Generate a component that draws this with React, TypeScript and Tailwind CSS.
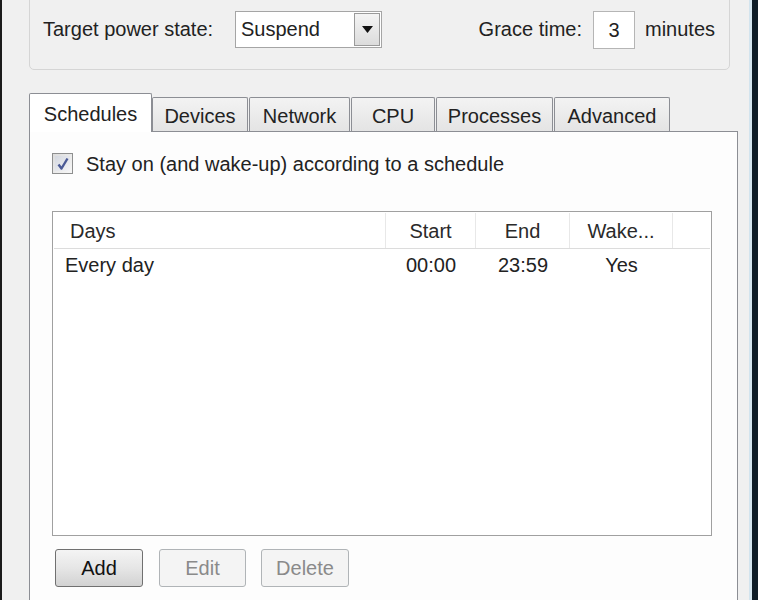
import { useState } from "react";

// Vista-style power settings dialog (schedules tab)

const tabs = [
  { label: "Devices", w: "w-[96px]" },
  { label: "Network", w: "w-[101px]" },
  { label: "CPU", w: "w-[84px]" },
  { label: "Processes", w: "w-[117px]" },
  { label: "Advanced", w: "w-[116px]" },
];

export default function App() {
  const [checked, setChecked] = useState(true);

  return (
    <div className="w-[758px] h-[600px] overflow-hidden flex bg-[#f0f0f0] text-[20px] leading-none text-[#222] font-['Liberation_Sans',Arial,sans-serif]">
      {/* left window frame */}
      <div className="w-[2px] shrink-0 bg-[#1b1b1b]" />

      <div className="flex-1 flex flex-col pl-[27px]">
        {/* Group box */}
        <div className="-mt-[12px] w-[701px] h-[82px] shrink-0 border border-[#d5d5d5] rounded-[5px] pt-[21px] pl-[13px] pr-[14px]">
          <div className="flex items-center h-[38px]">
            <span className="w-[192px]">Target power state:</span>
            <div className="w-[147px] h-[37px] border border-[#a5a5a5] bg-white flex items-center p-[1px]">
              <span className="flex-1 pl-[4px]">Suspend</span>
              <div className="w-[26px] h-[33px] border border-[#9a9a9a] bg-linear-to-b from-[#f4f4f4] to-[#dcdcdc] flex items-center justify-center">
                <svg width="11" height="7" viewBox="0 0 11 7">
                  <path d="M0 0 H11 L5.5 7 Z" fill="#111" />
                </svg>
              </div>
            </div>
            <div className="ml-auto flex items-center">
              <span>Grace time:</span>
              <div className="ml-[11px] w-[42px] h-[38px] border border-[#b5b5b5] bg-white flex items-center justify-center mt-[2px]">
                3
              </div>
              <span className="ml-[10px]">minutes</span>
            </div>
          </div>
        </div>

        {/* Tabs */}
        <div className="mt-[23px] flex items-end h-[38px] shrink-0">
          <div className="relative z-10 -mb-px w-[123px] h-[39px] bg-white border border-b-0 border-[#8c8e94] rounded-t-[2px] flex items-start justify-center pt-[10px]">
            Schedules
          </div>
          {tabs.map((t, i) => (
            <div
              key={t.label}
              className={`${t.w} ${i === 0 ? "ml-0" : "ml-[1px]"} h-[34px] border border-b-0 border-[#8c8e94] rounded-t-[2px] bg-linear-to-b from-[#f3f3f3] to-[#e4e4e4] flex items-center justify-center pt-[2px]`}
            >
              {t.label}
            </div>
          ))}
        </div>

        {/* Tab panel */}
        <div className="w-[709px] h-[600px] shrink-0 border border-[#8c8e94] bg-[#fdfdfd] pl-[22px] pt-[21px]">
          <label className="flex items-center cursor-pointer">
            <span
              onClick={() => setChecked(!checked)}
              className="w-[21px] h-[21px] border border-[#8e8f8f] bg-linear-to-br from-[#dcdcdc] to-[#f7f7f7] flex items-center justify-center p-[2px]"
            >
              <span className="w-full h-full bg-linear-to-br from-[#d4d8e0] to-[#f4f4f6] flex items-center justify-center">
                {checked && (
                  <svg width="14" height="14" viewBox="0 0 14 14">
                    <path
                      d="M2.5 7.5 L5.5 11.5 L11.5 1.5"
                      fill="none"
                      stroke="#4b5a96"
                      strokeWidth="2.4"
                      strokeLinejoin="round"
                    />
                  </svg>
                )}
              </span>
            </span>
            <span className="ml-[13px]">
              Stay on (and wake-up) according to a schedule
            </span>
          </label>

          {/* Schedule list */}
          <div className="mt-[37px] w-[660px] h-[325px] border border-[#a0a0a0] bg-white p-[1px]">
            <div className="flex h-[36px] border-b border-[#dcdcdc] text-[#2a2a2a]">
              <div className="w-[332px] pl-[16px] flex items-center border-r border-[#e8e8e8]">
                Days
              </div>
              <div className="w-[90px] flex items-center justify-center border-r border-[#e8e8e8]">
                Start
              </div>
              <div className="w-[94px] flex items-center justify-center border-r border-[#e8e8e8]">
                End
              </div>
              <div className="w-[103px] flex items-center justify-center border-r border-[#e8e8e8]">
                Wake...
              </div>
              <div className="flex-1" />
            </div>
            <div className="flex h-[31px]">
              <div className="w-[332px] pl-[11px] flex items-center">Every day</div>
              <div className="w-[90px] flex items-center justify-center">00:00</div>
              <div className="w-[94px] flex items-center justify-center">23:59</div>
              <div className="w-[103px] flex items-center justify-center">Yes</div>
            </div>
          </div>

          {/* Buttons */}
          <div className="mt-[13px] ml-[3px] flex">
            <button className="w-[88px] h-[38px] rounded-[3px] border border-[#707070] bg-linear-to-b from-[#f4f4f4] via-[#e6e6e6] to-[#d2d2d2] text-[#111]">
              Add
            </button>
            <button
              disabled
              className="ml-[16px] w-[87px] h-[38px] rounded-[3px] border border-[#b0b4b7] bg-[#f4f4f4] text-[#8a8a8a]"
            >
              Edit
            </button>
            <button
              disabled
              className="ml-[15px] w-[88px] h-[38px] rounded-[3px] border border-[#b0b4b7] bg-[#f4f4f4] text-[#8a8a8a]"
            >
              Delete
            </button>
          </div>
        </div>
      </div>

      {/* right window frame */}
      <div className="w-[3px] shrink-0 bg-[#d3e4ee]" />
      <div className="w-[6px] shrink-0 bg-[#0d1b26]" />
    </div>
  );
}
